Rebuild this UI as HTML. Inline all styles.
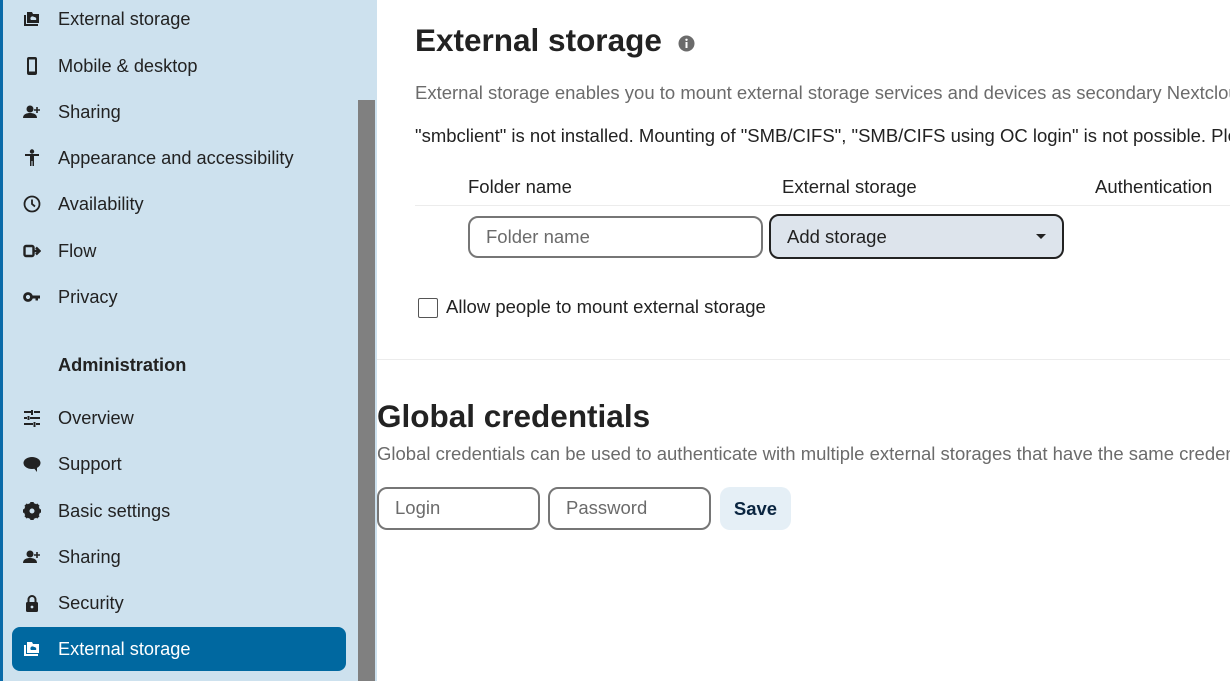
<!DOCTYPE html>
<html><head><meta charset="utf-8"><style>
*{margin:0;padding:0;box-sizing:border-box}
body{width:1230px;height:681px;overflow:hidden;background:#fff;font-family:"Liberation Sans",sans-serif;color:#222;position:relative}
#side{position:absolute;left:0;top:0;width:377px;height:681px;background:#cde1ee;border-left:3px solid #0a6aa8}
#sb{position:absolute;left:358px;top:100px;width:17px;height:581px;background:#808080}
#main{position:absolute;left:377px;top:0;width:853px;height:681px;overflow:hidden}
.it{position:absolute;left:0;height:44px;width:340px;font-size:18.2px;line-height:44px;color:#222;white-space:nowrap}
.it span{position:absolute;left:55px}
.it svg{position:absolute;left:20px;top:13px;width:18px;height:18px}
.act{left:9px;width:334px;background:#0068a0;border-radius:8px;color:#fff}
.act span{left:46px}.act svg{left:11px}
.t{position:absolute;white-space:nowrap}
.inp{position:absolute;border:2px solid #767676;border-radius:10px;background:#fff;font-size:18.5px;color:#6b6b6b;padding-left:16px;line-height:38px}
</style></head><body>
<div id="side">
<div class="it" style="top:-3px"><svg viewBox="0 0 18 18"><path d="M1 5h2v9h12v2H1z" fill="#222"/><path d="M4 2h5l1 2h6v9H4z" fill="#222"/><path d="M8 10h5a2 2 0 0 0-2-3 2 2 0 0 0-3 3z" fill="#cde1ee"/></svg><span>External storage</span></div>
<div class="it" style="top:44px"><svg viewBox="0 0 18 18"><rect x="4" y="0" width="10" height="18" rx="2" fill="#222"/><rect x="6" y="2.5" width="6" height="12" fill="#cde1ee"/></svg><span>Mobile &amp; desktop</span></div>
<div class="it" style="top:90px"><svg viewBox="0 0 18 18"><circle cx="7" cy="6" r="3.5" fill="#222"/><path d="M0 15c0-4 4-5 7-5s7 1 7 5z" fill="#222"/><path d="M14 4v6M11 7h6" stroke="#222" stroke-width="1.6"/></svg><span>Sharing</span></div>
<div class="it" style="top:136px"><svg viewBox="0 0 18 18"><circle cx="9" cy="2.5" r="2.2" fill="#222"/><path d="M2 5h14v2h-5v10H9.5v-5h-1v5H7V7H2z" fill="#222"/></svg><span>Appearance and accessibility</span></div>
<div class="it" style="top:182px"><svg viewBox="0 0 18 18"><circle cx="9" cy="9" r="7.5" fill="none" stroke="#222" stroke-width="1.8"/><path d="M9 4.5V9l3 2.5" fill="none" stroke="#222" stroke-width="1.8"/></svg><span>Availability</span></div>
<div class="it" style="top:229px"><svg viewBox="0 0 18 18"><rect x="1.5" y="4" width="9" height="10" rx="1.5" fill="none" stroke="#222" stroke-width="2.4"/><path d="M10 9h6M13 5.5 16.5 9 13 12.5" fill="none" stroke="#222" stroke-width="2.4"/></svg><span>Flow</span></div>
<div class="it" style="top:275px"><svg viewBox="0 0 18 18"><circle cx="5" cy="9" r="3.5" fill="none" stroke="#222" stroke-width="2.8"/><path d="M8 7.5h9v3h-2v2h-2.5v-2H8z" fill="#222"/></svg><span>Privacy</span></div>
<div class="t" style="left:55px;top:355px;font-size:18.2px;font-weight:bold">Administration</div>
<div class="it" style="top:396px"><svg viewBox="0 0 18 18"><path d="M1 3h7M11 3h6M1 9h3M7 9h10M1 15h9M13 15h4M9 1v5M5.5 7v4M11.5 13v5" stroke="#222" stroke-width="2"/></svg><span>Overview</span></div>
<div class="it" style="top:442px"><svg viewBox="0 0 18 18"><ellipse cx="9" cy="8" rx="8.5" ry="6" fill="#222"/><path d="M10 12l4 5 0-6z" fill="#222"/></svg><span>Support</span></div>
<div class="it" style="top:489px"><svg viewBox="0 0 18 18"><circle cx="9" cy="9" r="6" fill="none" stroke="#222" stroke-width="4"/><path d="M9 0v18M0 9h18M2.6 2.6l12.8 12.8M15.4 2.6 2.6 15.4" stroke="#222" stroke-width="3.5"/><circle cx="9" cy="9" r="2.5" fill="#cde1ee"/></svg><span>Basic settings</span></div>
<div class="it" style="top:535px"><svg viewBox="0 0 18 18"><circle cx="7" cy="6" r="3.5" fill="#222"/><path d="M0 15c0-4 4-5 7-5s7 1 7 5z" fill="#222"/><path d="M14 4v6M11 7h6" stroke="#222" stroke-width="1.6"/></svg><span>Sharing</span></div>
<div class="it" style="top:581px"><svg viewBox="0 0 18 18"><path d="M5.5 8V5.5a3.5 3.5 0 0 1 7 0V8" fill="none" stroke="#222" stroke-width="2"/><rect x="3" y="8" width="12" height="10" rx="1.5" fill="#222"/><circle cx="9" cy="13" r="1.4" fill="#cde1ee"/></svg><span>Security</span></div>
<div class="it act" style="top:627px"><svg viewBox="0 0 18 18"><path d="M1 5h2v9h12v2H1z" fill="#fff"/><path d="M4 2h5l1 2h6v9H4z" fill="#fff"/><path d="M8 10h5a2 2 0 0 0-2-3 2 2 0 0 0-3 3z" fill="#0068a0"/></svg><span>External storage</span></div>
</div>
<div id="sb"></div>

<div id="main">
<div class="t" style="left:38px;top:22px;font-size:31.5px;font-weight:bold;color:#222">External storage</div>
<svg style="position:absolute;left:301px;top:35px" width="17" height="17" viewBox="0 0 17 17"><circle cx="8.5" cy="8.5" r="8" fill="#6b6b6b"/><rect x="7.5" y="7" width="2" height="6" fill="#fff"/><circle cx="8.5" cy="4.8" r="1.2" fill="#fff"/></svg>
<div class="t" style="left:38px;top:82px;font-size:18.5px;color:#6b6b6b">External storage enables you to mount external storage services and devices as secondary Nextcloud storage devices.</div>
<div class="t" style="left:38px;top:125px;font-size:18.5px;color:#222">"smbclient" is not installed. Mounting of "SMB/CIFS", "SMB/CIFS using OC login" is not possible. Please ask your system administrator.</div>
<div class="t" style="left:91px;top:176px;font-size:18.5px">Folder name</div>
<div class="t" style="left:405px;top:176px;font-size:18.5px">External storage</div>
<div class="t" style="left:718px;top:176px;font-size:18.5px">Authentication</div>
<div style="position:absolute;left:38px;top:205px;width:815px;height:1px;background:#ececec"></div>
<div class="inp" style="left:91px;top:216px;width:295px;height:42px">Folder name</div>
<div class="inp" style="left:392px;top:214px;width:295px;height:45px;background:#dde4ec;border-color:#222;color:#222;line-height:41px">Add storage<span style="position:absolute;right:16px;top:18px;width:0;height:0;border-left:5px solid transparent;border-right:5px solid transparent;border-top:5px solid #222"></span></div>
<div style="position:absolute;left:41px;top:298px;width:20px;height:20px;border:1.5px solid #555;border-radius:2px"></div>
<div class="t" style="left:69px;top:296px;font-size:18.5px">Allow people to mount external storage</div>
<div style="position:absolute;left:0;top:359px;width:853px;height:1px;background:#ececec"></div>
<div class="t" style="left:0;top:398px;font-size:31.5px;font-weight:bold">Global credentials</div>
<div class="t" style="left:0;top:443px;font-size:18.5px;color:#6b6b6b">Global credentials can be used to authenticate with multiple external storages that have the same credentials.</div>
<div class="inp" style="left:0;top:487px;width:163px;height:43px">Login</div>
<div class="inp" style="left:171px;top:487px;width:163px;height:43px">Password</div>
<div style="position:absolute;left:343px;top:487px;width:71px;height:43px;background:#e5eff6;border-radius:10px;font-size:18.5px;font-weight:bold;color:#0a2540;text-align:center;line-height:43px">Save</div>
</div>
</body></html>
